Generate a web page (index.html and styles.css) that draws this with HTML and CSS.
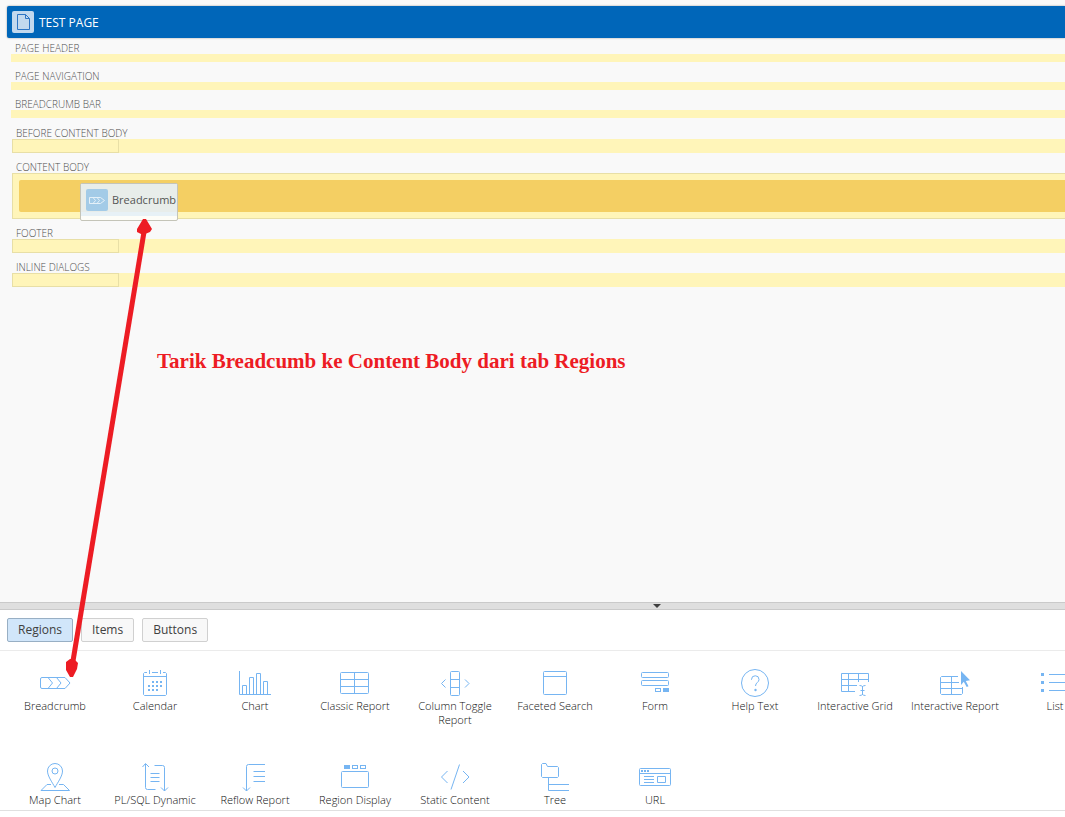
FILE: index.html
```html
<!DOCTYPE html>
<html lang="en">
<head>
<meta charset="utf-8">
<title>Test Page</title>
<link rel="stylesheet" href="styles.css">
</head>
<body>
<main class="layout">
  <header class="page-title">
    <span class="page-icon"><svg width="22" height="22" viewBox="0 0 22 22"><path d="M5.500 3.500h8l4 4v11h-12zM13.500 3.500v4h4"/></svg></span>
    <h1>TEST PAGE</h1>
  </header>
  <div class="slots">
    <section class="slot"><h2>PAGE HEADER</h2><div class="bar"></div></section>
    <section class="slot"><h2>PAGE NAVIGATION</h2><div class="bar"></div></section>
    <section class="slot"><h2>BREADCRUMB BAR</h2><div class="bar"></div></section>
  </div>
  <div class="slots slots-grid">
    <section class="slot"><h2>BEFORE CONTENT BODY</h2><div class="bar tall"><div class="cell"></div></div></section>
    <section class="slot"><h2>CONTENT BODY</h2><div class="body-slot"><div class="drop"></div></div></section>
    <section class="slot"><h2>FOOTER</h2><div class="bar tall"><div class="cell"></div></div></section>
    <section class="slot"><h2>INLINE DIALOGS</h2><div class="bar tall"><div class="cell"></div></div></section>
  </div>
  <div class="drag">
    <div class="drag-chip">
      <span class="drag-icon"><svg width="22" height="22" viewBox="0 0 22 22"><path d="M4 8.500h10.500l4 3-4 3H3.500v-6zM7 8.500l2.500 3-2.500 3M11 8.500l2.500 3-2.500 3"/></svg></span>
      <span>Breadcrumb</span>
    </div>
  </div>
  <p class="note">Tarik Breadcumb ke Content Body dari tab Regions</p>
</main>
<div class="splitter"><svg width="8" height="5" viewBox="0 0 8 5"><path d="M0 0h8L4 4z"/></svg></div>
<nav class="tabs">
  <button class="tab active" type="button">Regions</button>
  <button class="tab" type="button">Items</button>
  <button class="tab" type="button">Buttons</button>
</nav>
<ul class="gallery">
  <li><svg viewBox="0 0 48 32"><path d="M11 10.500H34l5 5.500-5 5.500H11q-1.500 0-1.500-1.500v-8q0-1.500 1.500-1.500zM17 10.500l4.500 5.500-4.500 5.500M25.500 10.500l4.500 5.500-4.500 5.500"/></svg>Breadcrumb</li>
  <li><svg viewBox="0 0 48 32"><path d="M16 5.500h-2.500l-1 1v21l1 1h21l1-1v-21l-1-1H32M21 5.500h6M12.500 9.500h23M18.500 3v4M29.500 3v4"/><path class="fill" d="M21 14h2v2h-2zM25 14h2v2h-2zM29 14h2v2h-2zM17 18h2v2h-2zM21 18h2v2h-2zM25 18h2v2h-2zM29 18h2v2h-2zM17 22h2v2h-2zM21 22h2v2h-2zM25 22h2v2h-2z"/></svg>Calendar</li>
  <li><svg viewBox="0 0 48 32"><path d="M8.500 4v23.500H40M11.500 27.500v-9h4v9M18.500 27.500v-17h4v17M25.500 27.500v-21h4v21M32.500 27.500v-13h4v13"/></svg>Chart</li>
  <li><svg viewBox="0 0 48 32"><rect x="9.500" y="5.500" width="28" height="21" rx="1"/><path d="M9.500 12.500h28M9.500 19.500h28M23.500 5.500v21"/></svg>Classic Report</li>
  <li><svg viewBox="0 0 48 32"><rect x="19.500" y="4.500" width="9" height="24" rx="1"/><path d="M19.500 12.500h9M19.500 20.500h9M14.500 12.500l-4 4 4 4M34 12.500l4 4-4 4"/></svg>Column Toggle Report</li>
  <li><svg viewBox="0 0 48 32"><rect x="12.500" y="4.500" width="23" height="23" rx="1"/><path d="M12.500 9.500h23"/></svg>Faceted Search</li>
  <li><svg viewBox="0 0 48 32"><rect x="10.500" y="5.500" width="27" height="5" rx="1"/><rect x="10.500" y="13.500" width="27" height="5" rx="1"/><rect x="24.500" y="21.500" width="5" height="3"/><path class="fill" d="M32 21h6v4h-6z"/></svg>Form</li>
  <li><svg viewBox="0 0 48 32"><circle cx="24" cy="16" r="13.500"/><path d="M20.500 13v-.500a3.500 3.500 0 0 1 7.500 0c0 3-3.500 3-3.500 6.500"/><circle class="fill" cx="24.500" cy="23" r="1.200"/></svg>Help Text</li>
  <li><svg viewBox="0 0 48 32"><path d="M24 24.500H10.500v-18h27V15M10.500 12.500h27M10.500 18.500H26M17.500 6.500v18M27.500 6.500V15M31.500 19v9M28.500 18.500q2 0 3 1 1-1 3-1M28.500 28.500q2 0 3-1 1 1 3 1M29.500 23.500h4"/></svg>Interactive Grid</li>
  <li><svg viewBox="0 0 48 32"><path d="M27 9.500H10.500l-1 1v16l1 1h20l1-1V20M9.500 15.500H28M9.500 21.500h22M20.500 9.500v18"/><path class="fill" d="M30 4l9 9.300-4.200.700 2.700 5.300-1.800.800-2.900-5.400L30 18z"/></svg>Interactive Report</li>
  <li><svg viewBox="0 0 48 32"><path d="M18 7.500h24M18 15.500h24M18 23.500h24"/><path class="fill" d="M10 6h3v3h-3zM10 14h3v3h-3zM10 22h3v3h-3z"/></svg>List</li>
  <li><svg viewBox="0 0 48 32"><path d="M24 26.500C21 21 16.500 15 16.500 10a7.500 7.500 0 0 1 15 0c0 5-4.500 11-7.500 16.500zM20 23.500h-4l-6 6h28.500l-6-6H28"/><circle cx="24" cy="10" r="3"/></svg>Map Chart</li>
  <li><svg viewBox="0 0 48 32"><path d="M11.500 6l3-3.500 3.500 3.500M14.500 3v23.500q0 2 2 2h8M23.500 4.500h8q2 0 2 2V30M30 26.500l3.500 3.500 3.500-3.500M19.500 12.500h9M19.500 16.500h9M19.500 20.500h9"/></svg>PL/SQL Dynamic</li>
  <li><svg viewBox="0 0 48 32"><path d="M34 3.500H17.500q-2 0-2 2V30M12 26.500l3.500 3.500 3.500-3.500M22.500 10.500H34M22.500 15.500H34M22.500 20.500H34"/></svg>Reflow Report</li>
  <li><svg viewBox="0 0 48 32"><rect x="10.500" y="10.500" width="27" height="16" rx="1"/><rect x="21.500" y="4.500" width="5" height="3"/><rect x="29.500" y="4.500" width="5" height="3"/><path class="fill" d="M13 4h6v4h-6z"/></svg>Region Display</li>
  <li><svg viewBox="0 0 48 32"><path d="M16.500 10l-6 6 6 6M28.500 3.500l-8.500 25M32 10l6 6-6 6"/></svg>Static Content</li>
  <li><svg viewBox="0 0 48 32"><path d="M11.500 2.500H15l1.500 3h10l1 1v9l-1 1h-15l-1-1v-12zM17.500 16.500v13H38M17.500 23.500H38"/></svg>Tree</li>
  <li><svg viewBox="0 0 48 32"><rect x="8.500" y="7.500" width="31" height="17" rx="1"/><path d="M8.500 12.500h31M13 15.500h10M13 18.500h10M13 21.500h10M26.500 15.500h8v6h-8z"/><path class="fill" d="M10 9h2v2h-2zM13 9h2v2h-2zM16 9h2v2h-2z"/></svg>URL</li>
</ul>
<svg class="arrow" width="100" height="470" viewBox="0 0 100 470"><path class="shaft" d="M84 16L13 445"/><path d="M83 3h3l6 10-2 3-5 2h-4l-4-2v-3zM6 446l4-3h4l4 4-1 6-4 8h-3l-4-7z"/></svg>
</body>
</html>
```
FILE: styles.css
```css
* { box-sizing: border-box; }
body {
  margin: 0;
  min-height: 100vh;
  padding-bottom: 6px;
  display: flex;
  flex-direction: column;
  position: relative;
  overflow: hidden;
  background: #fff;
  color: #404040;
  font-family: "Open Sans", "Noto Sans", sans-serif;
}
h1, h2, p, ul { margin: 0; padding: 0; }

.layout {
  position: relative;
  flex: 1;
  padding: 6px 0 0 7px;
  background: #f9f9f9;
}
.page-title {
  height: 32px;
  padding-left: 5px;
  display: flex;
  align-items: center;
  gap: 5px;
  border-radius: 2px 0 0 2px;
  background: #0066b9;
  box-shadow: 0 0 2px rgba(0, 0, 0, 0.4);
}
.page-title h1 {
  color: #fff;
  font-size: 12px;
  font-weight: 400;
}
.page-icon {
  width: 22px;
  height: 22px;
  border-radius: 2px;
  background: #c2d9ee;
}
.page-icon svg { display: block; fill: none; stroke: #2d75c4; }

.slots {
  padding: 4px 0 0 4px;
  display: grid;
  gap: 8px;
}
.slots-grid { padding: 9px 0 0 5px; }
.slot h2 {
  padding-left: 4px;
  color: #505050;
  font-size: 10px;
  line-height: 12px;
  font-weight: 300;
}
.bar { height: 8px; background: #fff5b9; }
.bar.tall { height: 14px; }
.cell { width: 107px; height: 100%; border: 1px solid #e8dfa6; }
.body-slot {
  padding: 6px 0 6px 6px;
  border: 1px solid #e8dfa6;
  border-right: 0;
  background: #fff5b9;
}
.drop { height: 32px; border-radius: 2px 0 0 2px; background: #f4cf63; }

.drag {
  position: absolute;
  left: 80px;
  top: 183px;
  width: 98px;
  height: 38px;
  overflow: hidden;
  border: 1px solid #c4c4b8;
  border-radius: 2px;
  background: #fdfdf8;
}
.drag-chip {
  height: 32px;
  padding: 5px 0 0 5px;
  display: flex;
  gap: 4px;
  background: linear-gradient(#e8edea 28px, #e7f1f6 28px);
  color: #555;
  font-size: 11px;
  line-height: 22px;
}
.drag-icon {
  flex: none;
  width: 22px;
  height: 22px;
  border-radius: 2px;
  background: #a3cbe7;
}
.drag-icon svg { display: block; fill: none; stroke: #e4f0f8; }

.note {
  position: absolute;
  left: 157px;
  top: 349px;
  color: #ed1c24;
  font: bold 21px/24px "Liberation Serif", serif;
  white-space: nowrap;
}

.splitter {
  height: 8px;
  padding-left: 249px;
  display: flex;
  align-items: center;
  justify-content: center;
  border: solid #cacaca;
  border-width: 1px 0;
  background: #dfdfdf;
}
.splitter svg { fill: #404040; }

.tabs {
  height: 41px;
  padding: 8px 7px;
  display: flex;
  align-items: flex-start;
  gap: 8px;
  border-bottom: 1px solid #ebebeb;
}
.tab {
  height: 24px;
  padding: 0 10px;
  border: 1px solid #d0d0d0;
  border-radius: 2px;
  background: #f8f8f8;
  color: #404040;
  font: 12px/22px "Open Sans", "Noto Sans", sans-serif;
}
.tab.active { border-color: #98afc4; background: #d1e6fa; }

.gallery {
  padding: 16px 5px 3px;
  display: grid;
  grid-template-columns: repeat(11, 100px);
  grid-template-rows: 60px 46px;
  row-gap: 34px;
  overflow: hidden;
  border-bottom: 1px solid #e0e0e0;
  list-style: none;
}
.gallery li {
  padding: 0 4px;
  color: #101010;
  font-size: 11px;
  line-height: 14px;
  font-weight: 300;
  text-align: center;
}
.gallery svg {
  display: block;
  width: 48px;
  height: 32px;
  margin: 0 auto;
  fill: none;
  stroke: #76b5f2;
}
.gallery .fill { fill: #76b5f2; stroke: none; }

.arrow {
  position: absolute;
  left: 60px;
  top: 216px;
  fill: #ed1c24;
  pointer-events: none;
}
.shaft { stroke: #ed1c24; stroke-width: 5px; }
```
